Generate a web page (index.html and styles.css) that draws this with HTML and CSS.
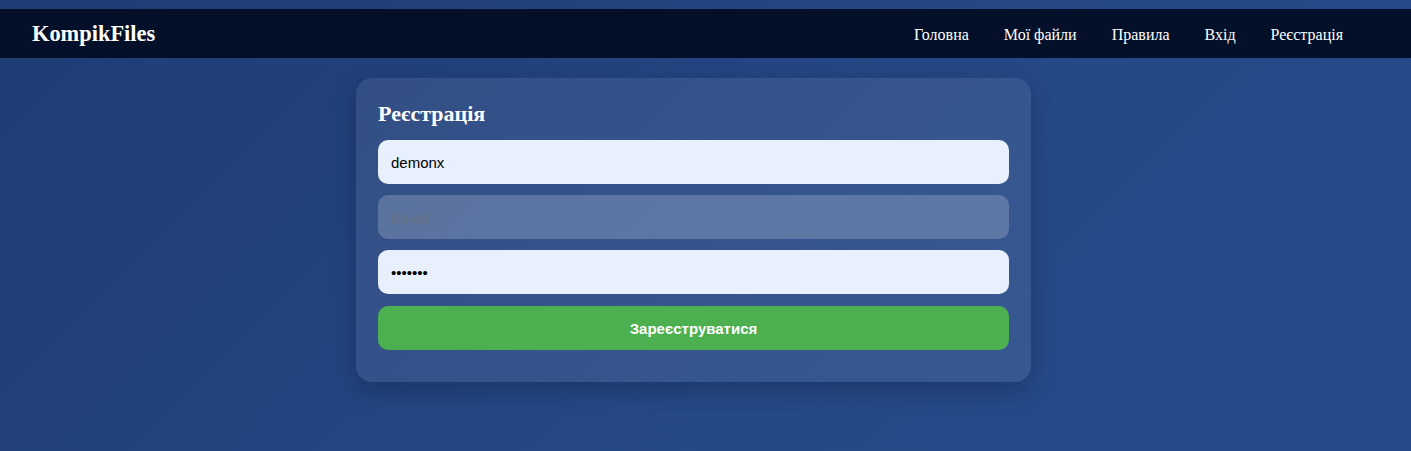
FILE: index.html
```html
<!DOCTYPE html>
<html lang="uk">
<head>
    <meta charset="UTF-8">
    <title>KompikFiles — Реєстрація</title>
    <link rel="stylesheet" href="styles.css">
</head>
<body>
<header class="topbar">
    <a class="logo" href="#">KompikFiles</a>
    <nav class="nav">
        <a href="#">Головна</a>
        <a href="#">Мої файли</a>
        <a href="#">Правила</a>
        <a href="#">Вхід</a>
        <a href="#">Реєстрація</a>
    </nav>
</header>

<main class="page">
    <form class="auth-card">
        <h2 class="auth-title">Реєстрація</h2>
        <input class="field field-filled" type="text" value="demonx" placeholder="Логін">
        <input class="field" type="email" placeholder="Email">
        <input class="field field-filled" type="password" value="1234567" placeholder="Пароль">
        <button class="btn-submit" type="button">Зареєструватися</button>
    </form>
</main>
</body>
</html>
```

FILE: styles.css
```css
html {
    min-height: 100%;
    background: linear-gradient(135deg, #1f3c74 0%, #254886 60%, #264b8b 100%);
}
body {
    margin: 0;
    min-height: 100vh;
    box-sizing: border-box;
    padding-top: 9px;
    font-family: "Liberation Serif", "Times New Roman", serif;
    color: #ffffff;
}
.topbar {
    display: flex;
    align-items: center;
    justify-content: space-between;
    height: 49px;
    padding: 0 68px 0 32px;
    background-color: #04102a;
}
.logo {
    font-size: 22.4px;
    font-weight: bold;
    color: #ffffff;
    text-decoration: none;
}
.nav {
    display: flex;
    gap: 35px;
    padding-top: 2px;
}
.nav a {
    font-size: 16px;
    color: #ffffff;
    text-decoration: none;
}
.page {
    display: flex;
    justify-content: center;
    padding: 20px 0 60px;
}
.auth-card {
    display: flex;
    flex-direction: column;
    gap: 11px;
    width: 675px;
    box-sizing: border-box;
    margin-left: -24px;
    padding: 22px 22px 32px;
    background-color: rgba(255, 255, 255, 0.08);
    border-radius: 16px;
    box-shadow: 0 8px 24px rgba(0, 0, 0, 0.22);
}
.auth-title {
    margin: 0 0 1px;
    font-size: 22px;
    font-weight: bold;
    line-height: 28px;
}
.field {
    height: 44px;
    box-sizing: border-box;
    padding: 0 13px;
    border: none;
    border-radius: 10px;
    background-color: rgba(255, 255, 255, 0.2);
    font-family: "Liberation Sans", Arial, sans-serif;
    font-size: 15px;
    color: #000000;
    outline: none;
}
.field::placeholder {
    color: #6a7080;
}
.field-filled {
    background-color: #e8f0fe;
}
.btn-submit {
    height: 44px;
    margin-top: 1px;
    border: none;
    border-radius: 10px;
    background-color: #4caf50;
    color: #ffffff;
    font-family: "Liberation Sans", Arial, sans-serif;
    font-size: 15px;
    font-weight: bold;
    cursor: pointer;
}
```
